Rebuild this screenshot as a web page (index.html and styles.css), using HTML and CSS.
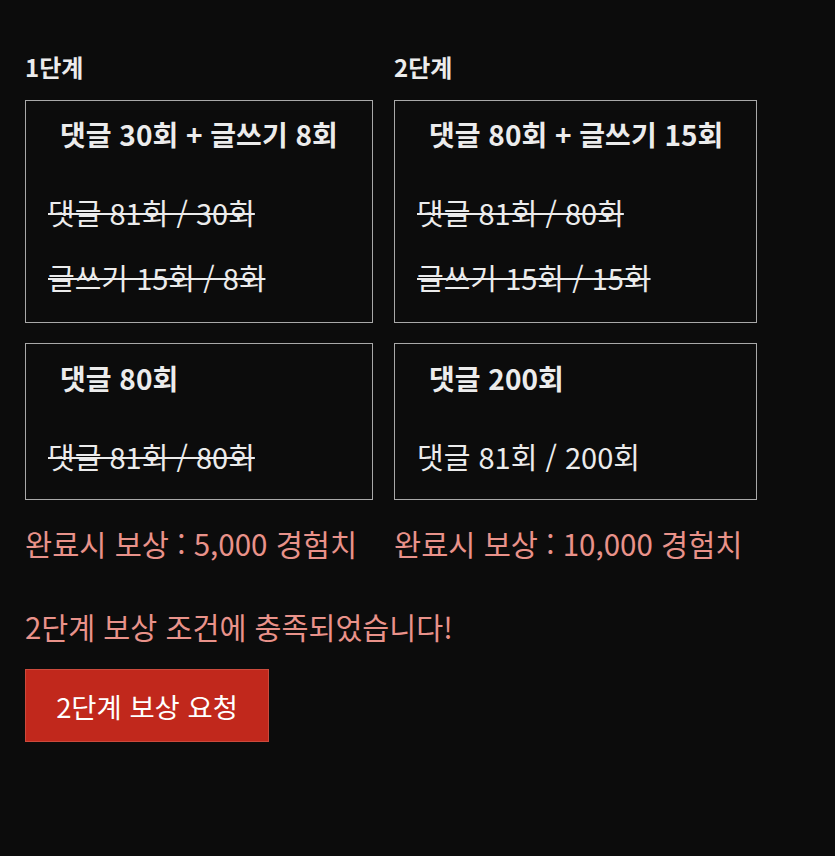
FILE: index.html
```html
<!DOCTYPE html>
<html lang="ko">
<head>
<meta charset="utf-8">
<link rel="stylesheet" href="styles.css">
</head>
<body>
<div class="page">
  <div class="stages">
    <div class="stage stage1">
      <div class="stage-label">1단계</div>
      <div class="box box-a">
        <div class="title">댓글 30회 + 글쓰기 8회</div>
        <div class="row first done">댓글 81회 / 30회</div>
        <div class="row second done">글쓰기 15회 / 8회</div>
      </div>
      <div class="box box-b">
        <div class="title">댓글 80회</div>
        <div class="row first done">댓글 81회 / 80회</div>
      </div>
      <div class="reward">완료시 보상 : 5,000 경험치</div>
    </div>
    <div class="stage stage2">
      <div class="stage-label">2단계</div>
      <div class="box box-a">
        <div class="title">댓글 80회 + 글쓰기 15회</div>
        <div class="row first done">댓글 81회 / 80회</div>
        <div class="row second done">글쓰기 15회 / 15회</div>
      </div>
      <div class="box box-b">
        <div class="title">댓글 200회</div>
        <div class="row first">댓글 81회 / 200회</div>
      </div>
      <div class="reward">완료시 보상 : 10,000 경험치</div>
    </div>
  </div>
  <div class="message">2단계 보상 조건에 충족되었습니다!</div>
  <button class="claim">2단계 보상 요청</button>
</div>
</body>
</html>
```
FILE: styles.css
```css
html, body {
  margin: 0;
  padding: 0;
  background: #0c0c0c;
}
body {
  font-family: "Noto Sans CJK KR", "Noto Sans", sans-serif;
  color: #ececec;
  height: 856px;
}
.page {
  padding: 49px 0 0 25px;
}
.stages {
  display: flex;
  gap: 21px;
}
.stage1 { width: 348px; }
.stage2 { width: 363px; }
.stage {
  display: flex;
  flex-direction: column;
}
.stage-label {
  font-size: 24px;
  font-weight: 700;
  line-height: 36px;
  margin-bottom: 15px;
}
.box {
  box-sizing: border-box;
  border: 1px solid #a9a9a9;
  padding: 0 22px;
}
.box-a {
  height: 223px;
  padding-top: 15px;
  margin-bottom: 20px;
}
.box-b {
  height: 157px;
  padding-top: 16px;
}
.title {
  font-size: 28px;
  font-weight: 700;
  line-height: 36px;
  padding-left: 12px;
  white-space: nowrap;
}
.row {
  font-size: 29px;
  line-height: 36px;
  white-space: nowrap;
}
.row.first { margin-top: 42px; }
.row.second { margin-top: 29px; }
.done {
  text-decoration: line-through;
  text-decoration-thickness: 2px;
}
.reward {
  margin-top: 25px;
  font-size: 29.5px;
  line-height: 36px;
  color: #e9928a;
  white-space: nowrap;
}
.message {
  margin-top: 47px;
  font-size: 29.3px;
  line-height: 36px;
  color: #e9928a;
  white-space: nowrap;
}
.claim {
  margin-top: 25px;
  width: 244px;
  height: 73px;
  background: #c1281c;
  border: 1px solid #cc4a3c;
  color: #fff;
  font-family: inherit;
  font-size: 27.4px;
  padding: 0;
  display: flex;
  align-items: center;
  justify-content: center;
}
```
